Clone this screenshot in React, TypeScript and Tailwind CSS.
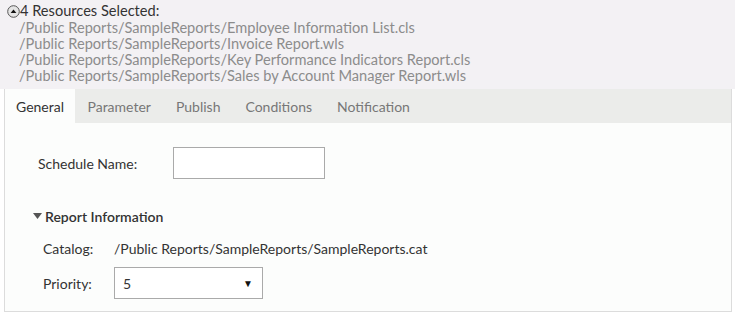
import React, { useState } from 'react';

const resources = [
  '/Public Reports/SampleReports/Employee Information List.cls',
  '/Public Reports/SampleReports/Invoice Report.wls',
  '/Public Reports/SampleReports/Key Performance Indicators Report.cls',
  '/Public Reports/SampleReports/Sales by Account Manager Report.wls',
];

const tabs = ['General', 'Parameter', 'Publish', 'Conditions', 'Notification'];

const CollapseIcon = () => (
  <svg width="13" height="13" viewBox="0 0 13 13" className="shrink-0">
    <circle cx="6.5" cy="6.5" r="5.8" fill="#e4e4e4" stroke="#555" strokeWidth="1" />
    <path d="M3.6 8 L6.5 4.6 L9.4 8 Z" fill="#111" />
  </svg>
);

const App: React.FC = () => {
  const [active, setActive] = useState('General');
  const [name, setName] = useState('');

  return (
    <div className="w-[735px] h-[313px] bg-white font-['Lato','Noto_Sans',sans-serif] text-[14px] overflow-hidden">
      {/* selected resources */}
      <div className="bg-[#f3f1f4] h-[89px] pl-[7px] pt-[2px] text-[14.6px]">
        <div className="flex items-center h-[18px] text-[#333]">
          <CollapseIcon />
          <span className="leading-[18px]">4 Resources Selected:</span>
        </div>
        <div className="pl-[12px] text-[#8c8c8c] leading-[16px]">
          {resources.map((r) => (
            <div key={r}>{r}</div>
          ))}
        </div>
      </div>

      <div className="ml-[4px] mr-[3px] border-l border-r border-b border-[#dcdcdc] h-[223px] bg-[#fcfdfc]">
        {/* tabs */}
        <div className="flex bg-[#ebecea] h-[34px]">
          {tabs.map((t) => (
            <button
              key={t}
              onClick={() => setActive(t)}
              className={
                t === active
                  ? 'px-[11px] h-[34px] bg-[#fcfdfc] text-[#333]'
                  : 'px-[12.5px] h-[34px] text-[#777]'
              }
            >
              {t}
            </button>
          ))}
        </div>

        <div className="pl-[33px] pt-[24px]">
          <div className="flex items-center">
            <label className="w-[135px] text-[#333]">Schedule Name:</label>
            <input
              type="text"
              value={name}
              onChange={(e) => setName(e.target.value)}
              className="w-[152px] h-[32px] border border-[#aaaaaa] bg-white outline-none px-2"
            />
          </div>

          <div className="flex items-center mt-[27px] -ml-[5px] text-[#333] font-semibold">
            <svg width="9" height="6" viewBox="0 0 9 6" className="mr-[3px] mb-[2px]">
              <path d="M0 0 L9 0 L4.5 6 Z" fill="#555" />
            </svg>
            Report Information
          </div>

          <div className="pl-[5px] mt-[11px] flex items-center text-[#333]">
            <span className="w-[71px]">Catalog:</span>
            <span>/Public Reports/SampleReports/SampleReports.cat</span>
          </div>

          <div className="pl-[5px] mt-[8px] flex items-center text-[#333]">
            <span className="w-[71px]">Priority:</span>
            <div className="relative w-[149px] h-[32px] border border-[#aaaaaa] bg-white flex items-center pl-[8px]">
              <span>5</span>
              <span className="absolute right-[9px] text-[10px] text-[#111]">▼</span>
            </div>
          </div>
        </div>
      </div>
    </div>
  );
};

export default App;
